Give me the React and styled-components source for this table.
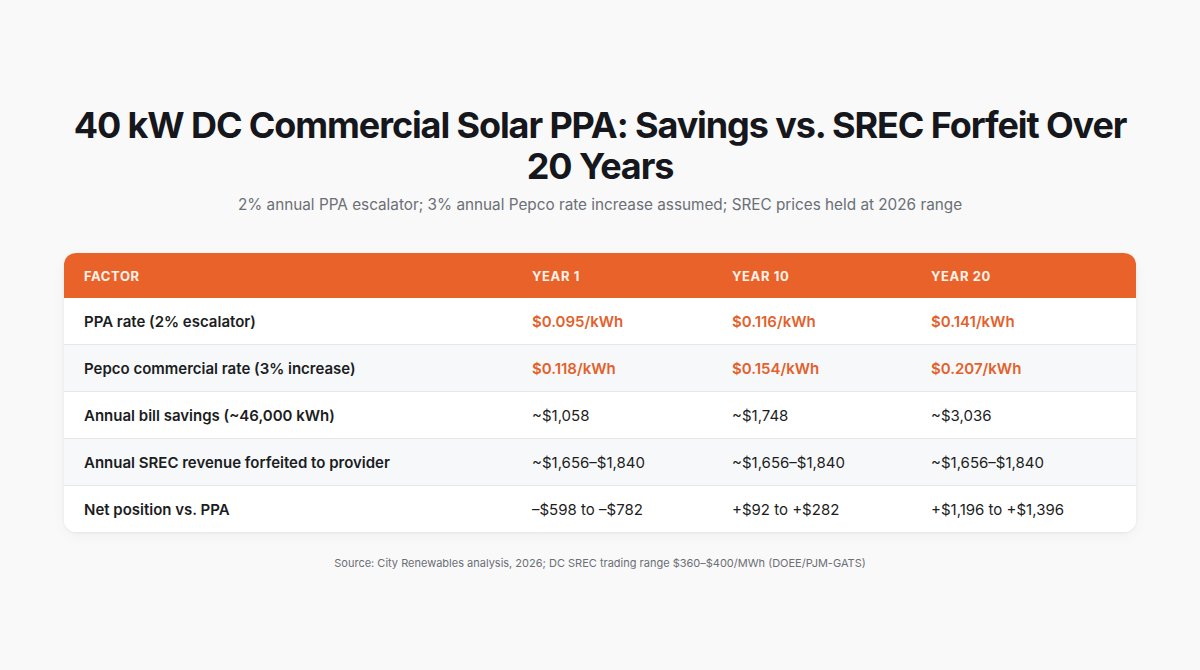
import styled, { createGlobalStyle } from 'styled-components';

const GlobalStyle = createGlobalStyle`
  html, body {
    margin: 0;
    padding: 0;
    background: #f9f9f9;
  }
  body {
    font-family: Inter, "Noto Sans", "Liberation Sans", sans-serif;
    color: #16181d;
  }
`;

const Page = styled.div`
  width: 1200px;
  height: 670px;
  box-sizing: border-box;
  padding: 105px 40px 0;
  display: flex;
  flex-direction: column;
  align-items: center;
`;

const Title = styled.h1`
  margin: 0;
  font-size: 36px;
  line-height: 41px;
  font-weight: 700;
  letter-spacing: -1.1px;
  text-align: center;
  color: #15171c;
  max-width: 1100px;
`;

const Subtitle = styled.p`
  margin: 8px 0 0;
  font-size: 15.3px;
  line-height: 20px;
  color: #6b6f76;
  text-align: center;
`;

const Table = styled.div`
  margin-top: 38px;
  width: 1072px;
  background: #ffffff;
  border-radius: 12px;
  overflow: hidden;
  box-shadow: 0 1px 3px rgba(0, 0, 0, 0.06), 0 4px 14px rgba(0, 0, 0, 0.04);
`;

const Row = styled.div`
  display: grid;
  grid-template-columns: 448px 200px 199px 1fr;
  height: ${p => (p.$head ? '45px' : '46px')};
  align-items: center;
  background: ${p => (p.$head ? '#e9622a' : p.$alt ? '#f6f8fa' : '#ffffff')};
  border-top: ${p => (p.$head || p.$first ? 'none' : '1px solid #e4e7eb')};
`;

const HeadCell = styled.div`
  padding-left: 20px;
  font-size: 13px;
  font-weight: 700;
  letter-spacing: 0.6px;
  text-transform: uppercase;
  color: #fff3ea;
`;

const Cell = styled.div`
  padding-left: 20px;
  font-size: 15px;
  font-weight: ${p => (p.$label || p.$accent ? 600 : 400)};
  color: ${p => (p.$accent ? '#e3612b' : '#1b1d22')};
`;

const Source = styled.p`
  margin: 24px 0 0;
  font-size: 11px;
  color: #6b6f76;
  text-align: center;
`;

const rows = [
  { label: 'PPA rate (2% escalator)', values: ['$0.095/kWh', '$0.116/kWh', '$0.141/kWh'], accent: true },
  { label: 'Pepco commercial rate (3% increase)', values: ['$0.118/kWh', '$0.154/kWh', '$0.207/kWh'], accent: true },
  { label: 'Annual bill savings (~46,000 kWh)', values: ['~$1,058', '~$1,748', '~$3,036'] },
  { label: 'Annual SREC revenue forfeited to provider', values: ['~$1,656–$1,840', '~$1,656–$1,840', '~$1,656–$1,840'] },
  { label: 'Net position vs. PPA', values: ['–$598 to –$782', '+$92 to +$282', '+$1,196 to +$1,396'] },
];

const App = () => (
  <>
    <GlobalStyle />
    <Page>
      <Title>40 kW DC Commercial Solar PPA: Savings vs. SREC Forfeit Over 20 Years</Title>
      <Subtitle>2% annual PPA escalator; 3% annual Pepco rate increase assumed; SREC prices held at 2026 range</Subtitle>
      <Table>
        <Row $head>
          <HeadCell>Factor</HeadCell>
          <HeadCell>Year 1</HeadCell>
          <HeadCell>Year 10</HeadCell>
          <HeadCell>Year 20</HeadCell>
        </Row>
        {rows.map((r, i) => (
          <Row key={r.label} $alt={i % 2 === 1} $first={i === 0}>
            <Cell $label>{r.label}</Cell>
            {r.values.map((v, j) => (
              <Cell key={j} $accent={r.accent}>{v}</Cell>
            ))}
          </Row>
        ))}
      </Table>
      <Source>Source: City Renewables analysis, 2026; DC SREC trading range $360–$400/MWh (DOEE/PJM-GATS)</Source>
    </Page>
  </>
);

export default App;
